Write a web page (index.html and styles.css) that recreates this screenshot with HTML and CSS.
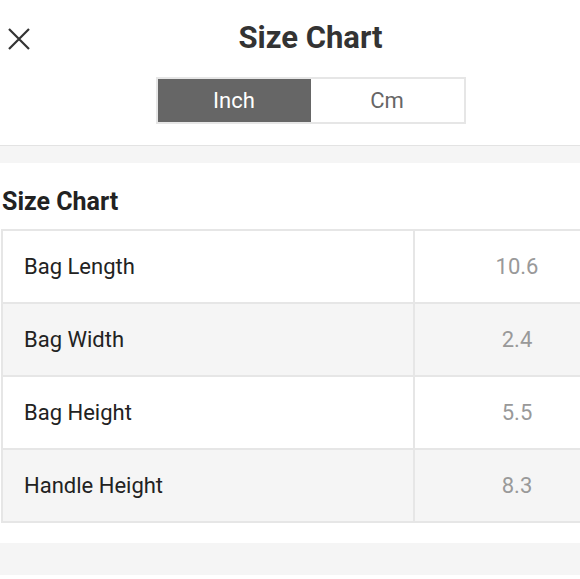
FILE: index.html
```html
<!DOCTYPE html>
<html>
<head>
<meta charset="utf-8">
<link rel="stylesheet" href="styles.css">
</head>
<body>
<div class="page">
  <header class="header">
    <button class="close" aria-label="Close">
      <svg width="24" height="24" viewBox="0 0 24 24"><path d="M2 2 L22 22 M22 2 L2 22" stroke="#333" stroke-width="2.2" fill="none"/></svg>
    </button>
    <h1 class="title">Size Chart</h1>
  </header>
  <div class="toggle-row">
    <div class="toggle">
      <div class="seg seg-active">Inch</div>
      <div class="seg">Cm</div>
    </div>
  </div>
  <div class="band band-top"></div>
  <section class="chart">
    <h2 class="chart-title">Size Chart</h2>
    <div class="table">
      <div class="row"><div class="label">Bag Length</div><div class="value">10.6</div></div>
      <div class="row alt"><div class="label">Bag Width</div><div class="value">2.4</div></div>
      <div class="row"><div class="label">Bag Height</div><div class="value">5.5</div></div>
      <div class="row alt"><div class="label">Handle Height</div><div class="value">8.3</div></div>
    </div>
  </section>
  <div class="band band-bottom"></div>
</div>
</body>
</html>
```
FILE: styles.css
```css
html, body {
  margin: 0;
  padding: 0;
  background: #fff;
  overflow: hidden;
}
body {
  font-family: Roboto, "Liberation Sans", sans-serif;
  color: #222;
}
.page {
  width: 621px;
}
.header {
  position: relative;
  height: 77px;
  display: flex;
  justify-content: center;
  align-items: flex-start;
}
.close {
  position: absolute;
  left: 6px;
  top: 26px;
  width: 25px;
  height: 25px;
  padding: 0;
  border: 0;
  background: none;
  display: flex;
  align-items: center;
  justify-content: center;
}
.title {
  margin: 0;
  padding-top: 19px;
  font-size: 31px;
  line-height: 38px;
  font-weight: 700;
  color: #333;
}
.toggle-row {
  display: flex;
  justify-content: center;
  height: 68px;
}
.toggle {
  display: flex;
  width: 306px;
  height: 43px;
  border: 2px solid #e6e6e6;
}
.seg {
  flex: 1;
  display: flex;
  align-items: center;
  justify-content: center;
  font-size: 22px;
  color: #666;
  background: #fff;
}
.seg-active {
  background: #666;
  color: #fff;
  flex: 0 0 153px;
}
.band {
  background: #f5f5f5;
}
.band-top {
  height: 17px;
  border-top: 1px solid #e3e3e3;
}
.chart {
  padding-top: 22px;
  padding-bottom: 20px;
}
.chart-title {
  margin: 0 0 0 2px;
  font-size: 25px;
  line-height: 34px;
  font-weight: 700;
  color: #222;
  height: 44px;
}
.table {
  margin-left: 1px;
  border: 2px solid #e6e6e6;
  border-bottom: 0;
}
.row {
  display: flex;
  height: 71px;
  border-bottom: 2px solid #e6e6e6;
  background: #fff;
}
.row.alt {
  background: #f5f5f5;
}
.label {
  flex: 0 0 389px;
  padding-left: 21px;
  display: flex;
  align-items: center;
  font-size: 22px;
  color: #222;
  border-right: 2px solid #e6e6e6;
}
.value {
  flex: 1;
  display: flex;
  align-items: center;
  justify-content: center;
  font-size: 22px;
  color: #999;
}
.band-bottom {
  height: 32px;
}
```
